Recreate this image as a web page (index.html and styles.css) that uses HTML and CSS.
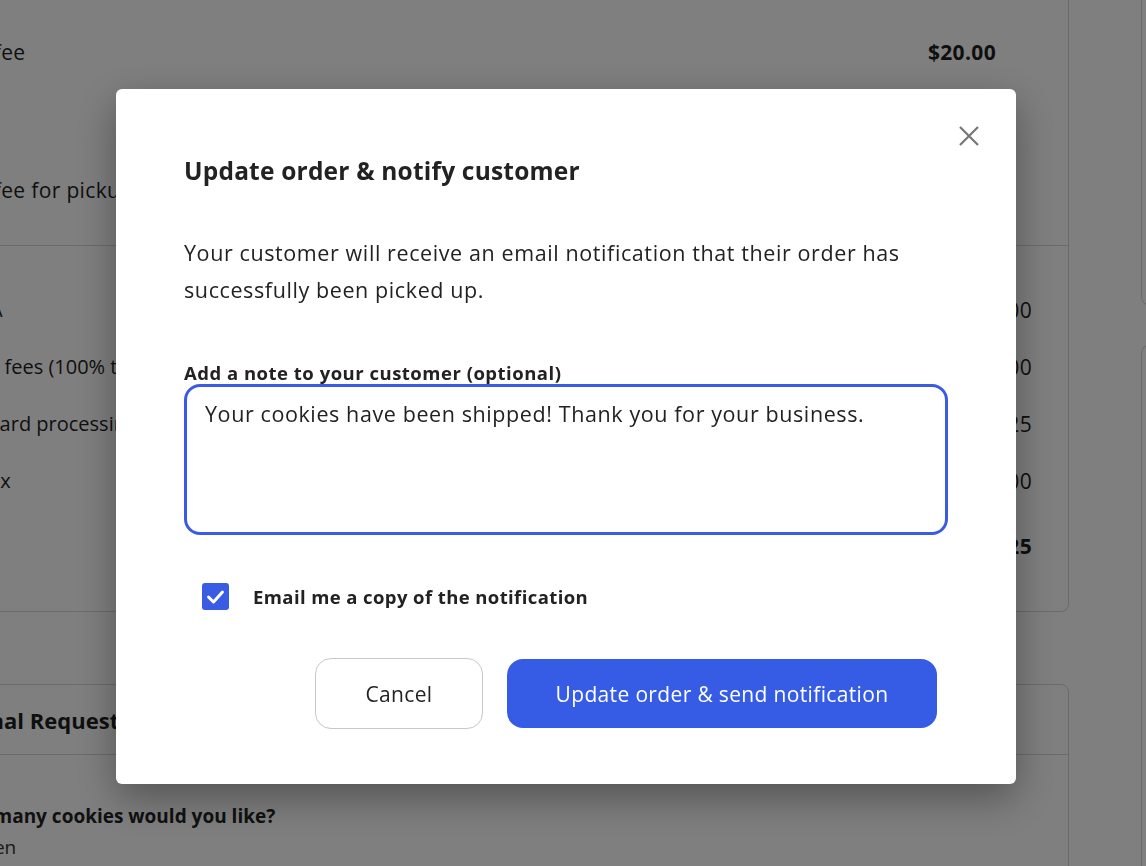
FILE: index.html
```html
<!DOCTYPE html>
<html lang="en">
<head>
<meta charset="utf-8">
<title>Update order</title>
<link rel="stylesheet" href="styles.css">
</head>
<body>
<div class="page">
  <main class="main">
    <section class="card card-summary">
      <div class="sec-a">
        <div class="row"><span class="lbl la1">Service fee</span><span class="amt bold">$20.00</span></div>
        <div class="row"><span class="lbl la1">Service fee for pickup orders</span><span class="amt"></span></div>
      </div>
      <div class="sec-b">
        <div class="row"><span class="lbl lb1">A</span><span class="amt">$20.00</span></div>
        <div class="row"><span class="lbl lb2">Tip fees (100% to you)</span><span class="amt">$0.00</span></div>
        <div class="row"><span class="lbl lb3">Card processing fee</span><span class="amt">$1.25</span></div>
        <div class="row"><span class="lbl lb4">Tax</span><span class="amt">$0.00</span></div>
        <div class="row total"><span class="lbl"></span><span class="amt bold">$21.25</span></div>
      </div>
    </section>
    <section class="card card-req">
      <div class="req-head"><span>Additional Requests</span></div>
      <div class="req-body">
        <div class="q">How many cookies would you like?</div>
        <div class="a">A dozen</div>
      </div>
    </section>
  </main>
  <aside class="side">
    <div class="side-card side-top"></div>
    <div class="side-card side-bottom"></div>
  </aside>
</div>

<div class="overlay">
  <div class="modal" role="dialog">
    <button class="close" aria-label="Close">
      <svg width="20" height="20" viewBox="0 0 20 20"><path d="M1 1 L19 19 M19 1 L1 19" stroke="#777" stroke-width="2.2" fill="none"/></svg>
    </button>
    <h2 class="title">Update order &amp; notify customer</h2>
    <p class="desc">Your customer will receive an email notification that their order has successfully been picked up.</p>
    <label class="note-label" for="note">Add a note to your customer (optional)</label>
    <textarea id="note" class="note">Your cookies have been shipped! Thank you for your business.</textarea>
    <div class="check-row">
      <span class="checkbox">
        <svg width="27" height="27" viewBox="0 0 27 27"><path d="M6.5 14 L11.5 19 L20.5 9" stroke="#fff" stroke-width="3" fill="none" stroke-linecap="round" stroke-linejoin="round"/></svg>
      </span>
      <span class="check-label">Email me a copy of the notification</span>
    </div>
    <div class="actions">
      <button class="btn btn-cancel">Cancel</button>
      <button class="btn btn-primary">Update order &amp; send notification</button>
    </div>
  </div>
</div>
</body>
</html>
```

FILE: styles.css
```css
* { box-sizing: border-box; }
html, body { margin: 0; padding: 0; }
body {
  background: #fff;
  font-family: "Open Sans", Lato, sans-serif;
  color: #222;
  width: 1146px;
  height: 866px;
  overflow: hidden;
}

/* background page */
.page {
  display: flex;
  align-items: flex-start;
}
.main {
  width: 1129px;
  margin-left: -60px;
  flex: none;
}
.card {
  border: 1px solid #d6d6d6;
  border-radius: 8px;
  background: #fff;
}
.card-summary {
  border-top: none;
  border-top-left-radius: 0;
  border-top-right-radius: 0;
}
.sec-a {
  padding: 32px 72px 35px 60px;
  display: flex;
  flex-direction: column;
  gap: 98px;
}
.row {
  display: flex;
  justify-content: space-between;
  font-size: 21px;
  letter-spacing: 0.35px;
  line-height: 40px;
  color: #1e1e1e;
}
.sec-b {
  border-top: 1px solid #d6d6d6;
  padding: 50px 36px 51px 46px;
  display: flex;
  flex-direction: column;
  gap: 29px;
}
.sec-b .row { line-height: 28px; }
.sec-b .lbl { font-size: 20px; letter-spacing: 0; }
.sec-b .row.total { margin-top: 8px; font-weight: 700; }
.bold { font-weight: 700; }
.lbl { white-space: nowrap; }
.la1 { margin-left: -85px; }
.lb1 { margin-left: 3px; }
.lb2 { margin-left: -16px; }
.lb3 { margin-left: 0; }
.lb4 { margin-left: -9px; }

.card-req {
  margin-top: 72px;
}
.req-head {
  height: 70px;
  display: flex;
  align-items: center;
  padding-left: 0;
  font-size: 22px;
  font-weight: 700;
  color: #1e1e1e;
  border-bottom: 1px solid #d6d6d6;
}
.req-head span { white-space: nowrap; margin-left: -31px; }
.req-body {
  padding: 50px 0 20px 25px;
  font-size: 19px;
  line-height: 41px;
  white-space: nowrap;
}
.req-body .q { font-weight: 700; line-height: 22px; margin-left: -20px; }
.req-body .a { color: #333; margin-left: -21px; }

.side {
  margin-left: 72px;
  flex: none;
  width: 200px;
  display: flex;
  flex-direction: column;
  gap: 40px;
}
.side-card {
  border: 1px solid #d6d6d6;
  border-right: none;
  background: #fff;
}
.side-top {
  height: 305px;
  border-top: none;
  border-bottom-left-radius: 8px;
}
.side-bottom {
  height: 600px;
  border-top-left-radius: 8px;
}

/* overlay + modal */
.overlay {
  position: fixed;
  inset: 0;
  background: rgba(0, 0, 0, 0.5);
  display: flex;
  align-items: flex-start;
}
.modal {
  position: relative;
  margin: 89px 0 0 116px;
  width: 900px;
  height: 695px;
  background: #fff;
  border-radius: 6px;
  box-shadow: 0 14px 40px rgba(0, 0, 0, 0.35);
  padding: 66px 68px 0 68px;
  display: flex;
  flex-direction: column;
}
.close {
  position: absolute;
  top: 37px;
  right: 37px;
  width: 20px;
  height: 20px;
  padding: 0;
  margin: 0;
  border: none;
  background: none;
  display: block;
}
.close svg { display: block; }
.title {
  margin: 0;
  font-size: 24.5px;
  letter-spacing: 0.2px;
  line-height: 32px;
  font-weight: 700;
  color: #222;
}
.desc {
  margin: 47px 0 0;
  font-size: 21.5px;
  letter-spacing: 0.6px;
  line-height: 37px;
  color: #222;
}
.note-label {
  margin-top: 54px;
  font-size: 18.5px;
  letter-spacing: 0.5px;
  line-height: 22px;
  font-weight: 700;
  color: #222;
}
.note {
  display: block;
  width: 764px;
  height: 151px;
  border: 3px solid #3a5ce5;
  border-radius: 16px;
  padding: 13px 18px;
  font-family: inherit;
  font-size: 21.5px;
  letter-spacing: 0.6px;
  line-height: 28px;
  color: #222;
  resize: none;
  outline: none;
}
.check-row {
  margin-top: 48px;
  display: flex;
  align-items: center;
  padding-left: 18px;
  gap: 24px;
}
.checkbox {
  width: 27px;
  height: 27px;
  border-radius: 3px;
  background: #3a5ce5;
  display: block;
  flex: none;
}
.checkbox svg { display: block; }
.check-label {
  font-size: 18.5px;
  letter-spacing: 0.4px;
  font-weight: 700;
  line-height: 27px;
  color: #222;
}
.actions {
  margin-top: 48px;
  display: flex;
  justify-content: flex-end;
  align-items: center;
  gap: 24px;
  padding-right: 11px;
}
.btn {
  font-family: inherit;
  font-size: 21px;
  letter-spacing: 0.35px;
  border-radius: 16px;
  cursor: pointer;
}
.btn-cancel {
  width: 168px;
  height: 71px;
  background: #fff;
  border: 1px solid #c8c8c8;
  color: #222;
}
.btn-primary {
  width: 430px;
  height: 69px;
  background: #365ce6;
  border: none;
  color: #fff;
}
```
